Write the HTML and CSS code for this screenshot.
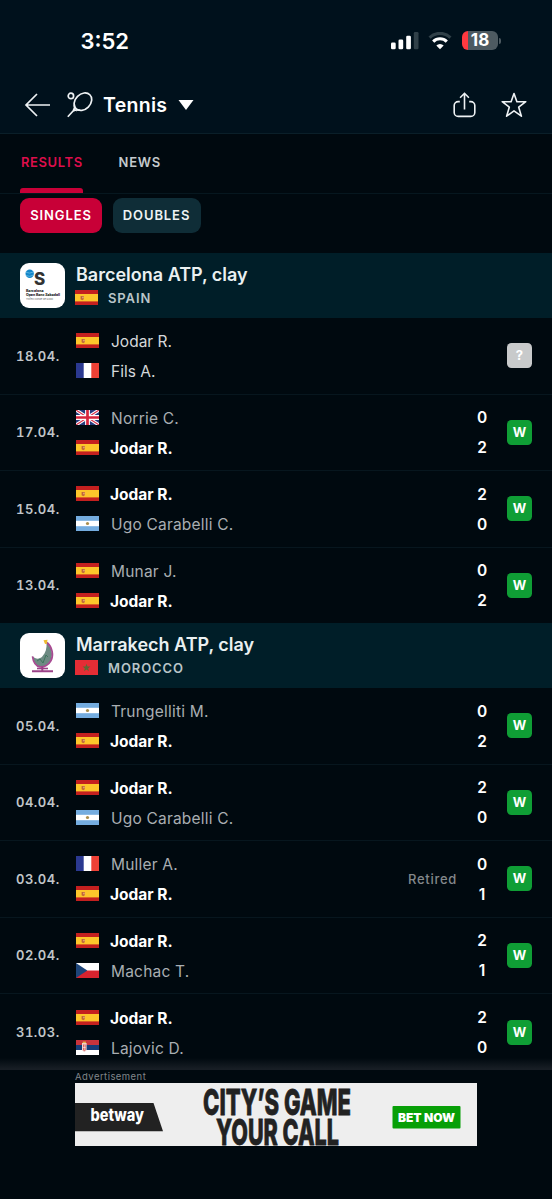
FILE: index.html
```html
<!DOCTYPE html>
<html lang="en">
<head>
  <meta charset="UTF-8" />
  <meta name="viewport" content="width=device-width, initial-scale=1.0"/>
  <title>Tennis results</title>
  <link rel="stylesheet" href="styles.css">
</head>
<body>
  <!-- Flags, used by the rows below -->
  <svg class="sprite" width="0" height="0">
    <symbol id="es" viewBox="0 0 23 15">
      <rect width="23" height="15" fill="#c4201f"/>
      <rect y="4" width="23" height="7.4" fill="#fdc62b"/>
      <path d="M5.6 6h3.2v3.200L7.2 10.200 5.600 9.200z" fill="#c0663a"/>
      <path d="M7.200 6.800h1.400v1.500H7.200z" fill="#e8b080"/>
    </symbol>
    <symbol id="fr" viewBox="0 0 23 15">
      <rect width="23" height="15" fill="#fff"/>
      <rect width="7.7" height="15" fill="#2b3990"/>
      <rect x="15.3" width="7.7" height="15" fill="#ee4136"/>
    </symbol>
    <symbol id="gb" viewBox="0 0 23 15">
      <rect width="23" height="15" fill="#253a7c"/>
      <path d="M0 0L23 15M23 0L0 15" stroke="#fff" stroke-width="3.2"/>
      <path d="M0 0L23 15M23 0L0 15" stroke="#d8304a" stroke-width="1.1"/>
      <path d="M11.5 0V15M0 7.5H23" stroke="#fff" stroke-width="4.8"/>
      <path d="M11.5 0V15M0 7.5H23" stroke="#d8243c" stroke-width="2.7"/>
    </symbol>
    <symbol id="ar" viewBox="0 0 23 15">
      <rect width="23" height="15" fill="#74acdf"/>
      <rect y="4.8" width="23" height="5.4" fill="#fff"/>
      <circle cx="11.5" cy="7.5" r="1.6" fill="#a98d4c"/>
    </symbol>
    <symbol id="ma" viewBox="0 0 23 15">
      <rect width="23" height="15" fill="#e52d35"/>
      <path d="M11.5 3.8l1 2.8h2.9l-2.3 1.8.9 2.9-2.5-1.8-2.5 1.8.9-2.9-2.3-1.8h2.9z" fill="#5b6a34"/>
    </symbol>
    <symbol id="cz" viewBox="0 0 23 15">
      <rect width="23" height="15" fill="#fff"/>
      <rect y="7.5" width="23" height="7.5" fill="#d7232e"/>
      <path d="M0 0l11.3 7.5L0 15z" fill="#1d4579"/>
    </symbol>
    <symbol id="rs" viewBox="0 0 23 15">
      <rect width="23" height="15" fill="#fff"/>
      <rect width="23" height="5" fill="#c9343d"/>
      <rect y="5" width="23" height="5" fill="#173c78"/>
      <path d="M6 3h4.6v7.2l-2.3 2-2.3-2z" fill="#f1d6d2"/>
      <path d="M7 4.500h2.600v5.600l-1.300 1.200L7 10.100z" fill="#d5524f"/>
      <path d="M8.300 4.500v6M7 7.400h2.600" stroke="#fff" stroke-width=".6"/>
      <path d="M6.700 1.600h3.200v1.500H6.700z" fill="#e8b34a"/>
    </symbol>
  </svg>

  <div class="screen">
    <header class="top">
      <div class="status-bar">
        <span class="clock">3:52</span>
        <div class="status-icons">
          <svg width="28" height="18" viewBox="0 0 28 18">
            <rect x="0" y="10.500" width="4.700" height="6.700" rx="1.300" fill="#fff"/>
            <rect x="7.500" y="7.500" width="4.700" height="9.700" rx="1.300" fill="#fff"/>
            <rect x="15.200" y="3.800" width="4.700" height="13.400" rx="1.300" fill="#fff"/>
            <rect x="22.800" y="0" width="4.700" height="17.200" rx="1.300" fill="#304048"/>
          </svg>
          <svg class="wifi" width="24" height="18" viewBox="0 0 24 18">
            <path d="M1.600 5.600a15 15 0 0 1 20.800 0" fill="none" stroke="#304048" stroke-width="3.200"/>
            <path d="M5.200 9.600a9.700 9.700 0 0 1 13.600 0" fill="none" stroke="#fff" stroke-width="3.100"/>
            <path d="M12 17.200l-3.700-3.700a5.300 5.300 0 0 1 7.400 0z" fill="#fff"/>
          </svg>
          <div class="battery"><span>18</span></div>
          <i class="battery-cap"></i>
        </div>
      </div>
      <div class="nav-bar">
        <svg class="back" width="27" height="24" viewBox="0 0 27 24" fill="none" stroke="#eef2f4" stroke-width="1.700">
          <path d="M26 12H2M13 1L2 12l11 11"/>
        </svg>
        <svg class="racket" width="26" height="26" viewBox="0 0 26 26" fill="none" stroke="#eef2f4" stroke-width="1.700">
          <circle cx="3.900" cy="3.900" r="2.700"/>
          <ellipse cx="15.900" cy="9.700" rx="9.800" ry="7.600" transform="rotate(-45 15.900 9.700)"/>
          <path d="M7.300 12.500c.8 2.500 0 4.600-1.200 6.500M13.500 18.300c-2.700-.8-5.200-.6-7.400.7M6.100 19L.8 24.800"/>
          <path d="M6.500 17l3 2" stroke-width="1"/>
        </svg>
        <h1>Tennis</h1>
        <svg class="caret" width="16" height="10" viewBox="0 0 16 10"><path d="M.5 0h15L8 10z" fill="#fff"/></svg>
        <svg class="share" width="23" height="26" viewBox="0 0 23 26" fill="none" stroke="#eef2f4" stroke-width="1.600">
          <path d="M6.800 9.600H5.200a4 4 0 0 0-4 4v6.800a4 4 0 0 0 4 4h12.600a4 4 0 0 0 4-4v-6.800a4 4 0 0 0-4-4h-1.600M11.500 17.500V1.400M7.100 5.700l4.400-4.400 4.400 4.400"/>
        </svg>
        <svg width="26" height="26" viewBox="0 0 26 26" fill="none" stroke="#eef2f4" stroke-width="1.600" stroke-linejoin="round">
          <path d="M13 1.500l2.900 8.200h8.900l-7.100 5.500 2.700 9L13 18.900l-7.400 5.300 2.700-9-7.100-5.500h8.900z"/>
        </svg>
      </div>
    </header>

    <nav class="tabs">
      <a class="tab active">RESULTS</a>
      <a class="tab news">NEWS</a>
    </nav>

    <div class="chips">
      <button class="chip active">SINGLES</button>
      <button class="chip doubles">DOUBLES</button>
    </div>

    <section class="tournament">
      <div class="tournament-head">
        <svg class="logo" viewBox="0 0 45 45">
          <rect width="45" height="45" rx="9" fill="#fff"/>
          <circle cx="9.700" cy="10.700" r="4.200" fill="#1487c9"/>
          <path d="M5.600 9.200q4 2 8.200-.4M5.800 12.500q4 2 7.700-.5" stroke="#75c3ea" stroke-width=".7" fill="none"/>
          <text class="logo-s" x="14" y="21.500">S</text>
          <text class="logo-name" x="6" y="28.600" textLength="17.500" lengthAdjust="spacingAndGlyphs">Barcelona</text>
          <text class="logo-name" x="6" y="32.800" textLength="34" lengthAdjust="spacingAndGlyphs">Open Banc Sabadell</text>
          <text class="logo-sub" x="6" y="36.700" textLength="27" lengthAdjust="spacingAndGlyphs">Trofeo Conde de Godó</text>
        </svg>
        <div class="tournament-info">
          <h2>Barcelona ATP, clay</h2>
          <div class="country"><svg class="flag"><use href="#es"/></svg>SPAIN</div>
        </div>
      </div>
      <div class="match">
        <span class="date">18.04.</span>
        <div class="teams">
          <div class="player next"><svg class="flag"><use href="#es"/></svg>Jodar R.</div>
          <div class="player next"><svg class="flag"><use href="#fr"/></svg>Fils A.</div>
        </div>
        <span class="badge unknown">?</span>
      </div>
      <div class="match">
        <span class="date">17.04.</span>
        <div class="teams">
          <div class="player"><svg class="flag"><use href="#gb"/></svg>Norrie C.</div>
          <div class="player winner"><svg class="flag"><use href="#es"/></svg>Jodar R.</div>
        </div>
        <div class="score"><span>0</span><span>2</span></div>
        <span class="badge">W</span>
      </div>
      <div class="match">
        <span class="date">15.04.</span>
        <div class="teams">
          <div class="player winner"><svg class="flag"><use href="#es"/></svg>Jodar R.</div>
          <div class="player"><svg class="flag"><use href="#ar"/></svg>Ugo Carabelli C.</div>
        </div>
        <div class="score"><span>2</span><span>0</span></div>
        <span class="badge">W</span>
      </div>
      <div class="match">
        <span class="date">13.04.</span>
        <div class="teams">
          <div class="player"><svg class="flag"><use href="#es"/></svg>Munar J.</div>
          <div class="player winner"><svg class="flag"><use href="#es"/></svg>Jodar R.</div>
        </div>
        <div class="score"><span>0</span><span>2</span></div>
        <span class="badge">W</span>
      </div>
    </section>

    <section class="tournament">
      <div class="tournament-head">
        <svg class="logo" viewBox="0 0 45 45">
          <rect width="45" height="45" rx="9" fill="#fff"/>
          <path d="M26.500 9.500c5.500 5 7 12.500 4 18-2.200 4.300-6.500 7-10.500 6.300-4-.8-6.800-5.200-7.500-10.500 3 3 7 3.200 9.800.2 3.400-3.700 4.700-8.500 4.200-14z" fill="#6d8a83"/>
          <path d="M27 9.500c5.500 5 6.800 12.500 4 18-2.200 4.300-6.800 7-11 6.300-4.200-.8-6.800-5.200-7.500-10.500" fill="none" stroke="#a84a92" stroke-width="1.700"/>
          <path d="M17 28l3-2 3 4 3-8 2 2" fill="none" stroke="#3d765d" stroke-width="1"/>
          <path d="M22.300 33.500v4.500M12 38.200h21" stroke="#9b4188" stroke-width="2"/>
          <path d="M17 35.500h11" stroke="#9b4188" stroke-width="1.600"/>
          <path d="M23.500 7.300l4-.5-.7 4-1.800.3z" fill="#eebc2e"/>
        </svg>
        <div class="tournament-info">
          <h2>Marrakech ATP, clay</h2>
          <div class="country"><svg class="flag"><use href="#ma"/></svg>MOROCCO</div>
        </div>
      </div>
      <div class="match">
        <span class="date">05.04.</span>
        <div class="teams">
          <div class="player"><svg class="flag"><use href="#ar"/></svg>Trungelliti M.</div>
          <div class="player winner"><svg class="flag"><use href="#es"/></svg>Jodar R.</div>
        </div>
        <div class="score"><span>0</span><span>2</span></div>
        <span class="badge">W</span>
      </div>
      <div class="match">
        <span class="date">04.04.</span>
        <div class="teams">
          <div class="player winner"><svg class="flag"><use href="#es"/></svg>Jodar R.</div>
          <div class="player"><svg class="flag"><use href="#ar"/></svg>Ugo Carabelli C.</div>
        </div>
        <div class="score"><span>2</span><span>0</span></div>
        <span class="badge">W</span>
      </div>
      <div class="match">
        <span class="date">03.04.</span>
        <div class="teams">
          <div class="player"><svg class="flag"><use href="#fr"/></svg>Muller A.</div>
          <div class="player winner"><svg class="flag"><use href="#es"/></svg>Jodar R.</div>
        </div>
        <span class="note">Retired</span>
        <div class="score"><span>0</span><span>1</span></div>
        <span class="badge">W</span>
      </div>
      <div class="match">
        <span class="date">02.04.</span>
        <div class="teams">
          <div class="player winner"><svg class="flag"><use href="#es"/></svg>Jodar R.</div>
          <div class="player"><svg class="flag"><use href="#cz"/></svg>Machac T.</div>
        </div>
        <div class="score"><span>2</span><span>1</span></div>
        <span class="badge">W</span>
      </div>
      <div class="match fade">
        <span class="date">31.03.</span>
        <div class="teams">
          <div class="player winner"><svg class="flag"><use href="#es"/></svg>Jodar R.</div>
          <div class="player"><svg class="flag"><use href="#rs"/></svg>Lajovic D.</div>
        </div>
        <div class="score"><span>2</span><span>0</span></div>
        <span class="badge">W</span>
      </div>
    </section>

    <footer class="ad">
      <span class="ad-label">Advertisement</span>
      <svg class="banner" viewBox="0 0 402 63">
        <rect width="402" height="63" fill="#eee"/>
        <path d="M0 20h78.500l9.500 28.300H0z" fill="#222"/>
        <text class="brand" x="15.500" y="37.500" textLength="53.500" lengthAdjust="spacingAndGlyphs">betway</text>
        <text class="slogan" x="128" y="32" textLength="148" lengthAdjust="spacingAndGlyphs">CITY’S GAME</text>
        <text class="slogan" x="141" y="62" textLength="123" lengthAdjust="spacingAndGlyphs">YOUR CALL</text>
        <rect x="317.500" y="23" width="68" height="22.500" rx="1" fill="#079f07"/>
        <text class="bet" x="351.500" y="38.800" text-anchor="middle">BET NOW</text>
      </svg>
    </footer>
  </div>
</body>
</html>
```
FILE: styles.css
```css
* {
  box-sizing: border-box;
}
body {
  margin: 0;
  background: #00090f;
  color: #fff;
  font-family: Inter, 'Liberation Sans', sans-serif;
}
h1, h2 {
  margin: 0;
  font-weight: 600;
}
svg {
  display: block;
  flex: none;
}
.sprite {
  position: absolute;
}
.screen {
  width: 552px;
  height: 1199px;
  overflow: hidden;
}

/* Status bar and title */
.top {
  height: 134px;
  background: #00111c;
  border-bottom: 1px solid #0a1f29;
}
.status-bar {
  height: 81px;
  display: flex;
  align-items: center;
  justify-content: space-between;
  padding: 0 51px 0 80.500px;
}
.clock {
  font-size: 22px;
  font-weight: 600;
}
.status-icons {
  display: flex;
  align-items: center;
}
.wifi {
  margin: 0 10px 0 9px;
}
.battery {
  width: 36px;
  height: 19px;
  border-radius: 6px;
  background: linear-gradient(90deg, #ff3940 6.500px, #4d5a61 6.500px);
  font-size: 17px;
  font-weight: 700;
  line-height: 19px;
  text-align: center;
}
.battery-cap {
  width: 2px;
  height: 6px;
  margin-left: 1px;
  border-radius: 0 2px 2px 0;
  background: #4d5a61;
}
.nav-bar {
  height: 48px;
  display: flex;
  align-items: center;
  padding: 0 25px 0 24px;
}
.racket {
  margin-left: 16px;
}
.nav-bar h1 {
  margin-left: 10px;
  font-size: 19.500px;
  letter-spacing: 0.3px;
}
.caret {
  margin-left: 11px;
}
.share {
  margin-left: auto;
  margin-right: 25px;
}

/* Tabs */
.tabs {
  height: 60px;
  display: flex;
  padding-left: 20px;
  border-bottom: 1px solid #06171f;
}
.tab {
  padding: 0 1px;
  font-size: 13px;
  font-weight: 600;
  letter-spacing: 0.8px;
  line-height: 57px;
  color: #c4cacd;
}
.tab.active {
  width: 63px;
  padding: 0;
  letter-spacing: 0.6px;
  text-indent: 1px;
  color: #dc0e4c;
}
.tab.active::after {
  content: '';
  display: block;
  height: 5px;
  margin-top: -3px;
  border-radius: 3px 3px 0 0;
  background: #c80037;
}
.tab.news {
  margin-left: 34.500px;
}
.chips {
  height: 59px;
  display: flex;
  align-items: flex-start;
  gap: 10.500px;
  padding: 4px 20px 0;
}
.chip {
  width: 82px;
  height: 35px;
  padding: 0 0 2px;
  border: none;
  border-radius: 9px;
  background: #0f2d37;
  color: #eef3f4;
  font-family: inherit;
  font-size: 13px;
  font-weight: 600;
  letter-spacing: 0.9px;
  text-align: center;
}
.chip.active {
  background: #c80037;
  color: #fff;
}
.chip.doubles {
  width: 88px;
}

/* Tournament */
.tournament-head {
  height: 65px;
  display: flex;
  align-items: center;
  padding-left: 20px;
  background: #001e28;
}
.logo {
  width: 45px;
  height: 45px;
}
.logo-s {
  font-size: 17px;
  font-weight: 800;
  fill: #333;
}
.logo-name {
  font-size: 3.500px;
  font-weight: 800;
  fill: #222;
}
.logo-sub {
  font-size: 2.600px;
  fill: #666;
}
.tournament-info {
  margin-left: 10px;
}
.tournament-info h2 {
  padding: 1px 0 0 1px;
  font-size: 18px;
  line-height: 23px;
  color: #eaf0f1;
}
.country {
  display: flex;
  align-items: center;
  height: 24px;
  font-size: 13px;
  font-weight: 600;
  letter-spacing: 0.9px;
  color: #b9c5c9;
}
.flag {
  width: 23px;
  height: 15px;
}
.country .flag {
  margin-right: 10px;
}

/* Match rows */
.match {
  height: 76.500px;
  display: flex;
  align-items: center;
  padding: 0 20px 0 16px;
  border-bottom: 1px solid #07161e;
}
.match:last-child {
  height: 75.500px;
  border-bottom: none;
}
.date {
  width: 60px;
  font-size: 13px;
  font-weight: 600;
  font-variant-numeric: tabular-nums;
  letter-spacing: 0.5px;
  color: #c1c6c9;
}
.teams {
  flex: 1;
}
.player {
  height: 30px;
  display: flex;
  align-items: center;
  gap: 12px;
  padding-top: 2px;
  font-size: 15.500px;
  letter-spacing: 0.2px;
  color: #a9aeb2;
}
.player .flag {
  margin-bottom: 2px;
}
.player.next {
  letter-spacing: 0;
  color: #d5d8da;
}
.player.winner {
  gap: 11px;
  font-weight: 700;
  letter-spacing: 0;
  color: #fff;
}
.score {
  width: 20px;
  margin-right: 15px;
  padding-top: 2px;
  font-size: 15.500px;
  font-weight: 600;
  line-height: 30px;
  text-align: center;
}
.score span {
  display: block;
}
.note {
  margin-right: 15px;
  font-size: 13px;
  font-weight: 500;
  letter-spacing: 0.7px;
  color: #83888b;
}
.badge {
  width: 25px;
  height: 25px;
  border-radius: 4.500px;
  background: #0f9e35;
  font-size: 13px;
  font-weight: 700;
  line-height: 25px;
  text-align: center;
}
.badge.unknown {
  background: #c8cacb;
}
.match.fade {
  height: 76px;
  background: linear-gradient(transparent 64px, #181e25 75px);
}

/* Advertisement */
.ad {
  padding: 0 75px;
}
.ad-label {
  display: block;
  height: 13px;
  font-size: 9.500px;
  line-height: 14px;
  letter-spacing: 0.450px;
  color: #80868a;
}
.banner {
  width: 402px;
  height: 63px;
}
.brand {
  font-size: 17px;
  font-weight: 800;
  fill: #fff;
}
.slogan {
  font-size: 36px;
  font-weight: 800;
  fill: #222;
  stroke: #222;
  stroke-width: 0.8px;
}
.bet {
  font-size: 12px;
  font-weight: 900;
  fill: #fff;
}
```
